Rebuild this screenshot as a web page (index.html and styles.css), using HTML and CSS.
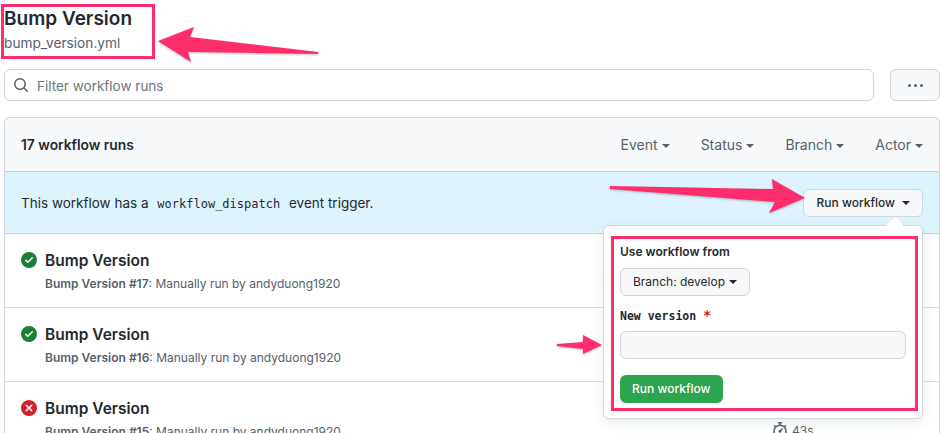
FILE: index.html
```html
<!DOCTYPE html>
<html>
  <head>
    <meta charset="utf8">
    <title>Bump Version</title>
    <link rel="stylesheet" href="styles.css">
  </head>
  <body>
    <div class="page">

      <div class="title-block">
        <h1>Bump Version</h1>
        <div class="file-name">bump_version.yml</div>
      </div>

      <div class="filter-row">
        <div class="filter">
          <svg class="search-icon" viewBox="0 0 16 16" width="16" height="16"><path d="M10.68 11.74a6 6 0 0 1-7.92-8.98 6 6 0 0 1 8.98 7.92l3.04 3.04a.75.75 0 1 1-1.06 1.06ZM11.5 7a4.5 4.5 0 1 0-9 0 4.5 4.5 0 0 0 9 0Z"/></svg>
          <span class="filter-text">Filter workflow runs</span>
        </div>
        <div class="more-button"><i></i><i></i><i></i></div>
      </div>

      <div class="box">
        <div class="box-header">
          <strong>17 workflow runs</strong>
          <div class="filters">
            <span class="caret-item">Event</span>
            <span class="caret-item">Status</span>
            <span class="caret-item">Branch</span>
            <span class="caret-item">Actor</span>
          </div>
        </div>

        <div class="dispatch">
          <span class="dispatch-text">This workflow has a <code>workflow_dispatch</code> event trigger.</span>
          <div class="run-button caret-item">Run workflow</div>

          <div class="popup">
            <div class="popup-label">Use workflow from</div>
            <div class="branch-button caret-item">Branch: develop</div>
            <div class="input-label">New version <span class="required">*</span></div>
            <div class="version-input"></div>
            <div class="green-button">Run workflow</div>
          </div>
        </div>

        <div class="run">
          <svg class="status ok" viewBox="0 0 16 16" width="16" height="16"><path d="M8 16A8 8 0 1 1 8 0a8 8 0 0 1 0 16Zm3.78-9.72a.75.75 0 0 0-1.06-1.06L6.75 9.19 5.28 7.72a.75.75 0 0 0-1.06 1.06l2 2a.75.75 0 0 0 1.06 0Z"/></svg>
          <div>
            <div class="run-title">Bump Version</div>
            <div class="run-sub"><b>Bump Version #17</b>: Manually run by andyduong1920</div>
          </div>
        </div>

        <div class="run">
          <svg class="status ok" viewBox="0 0 16 16" width="16" height="16"><path d="M8 16A8 8 0 1 1 8 0a8 8 0 0 1 0 16Zm3.78-9.72a.75.75 0 0 0-1.06-1.06L6.75 9.19 5.28 7.72a.75.75 0 0 0-1.06 1.06l2 2a.75.75 0 0 0 1.06 0Z"/></svg>
          <div>
            <div class="run-title">Bump Version</div>
            <div class="run-sub"><b>Bump Version #16</b>: Manually run by andyduong1920</div>
          </div>
        </div>

        <div class="run">
          <svg class="status bad" viewBox="0 0 16 16" width="16" height="16"><path d="M2.34 13.66A8 8 0 1 1 13.66 2.34 8 8 0 0 1 2.34 13.66Zm3.44-8.94a.75.75 0 0 0-1.06 1.06L6.94 8l-2.22 2.22a.75.75 0 1 0 1.06 1.06L8 9.06l2.22 2.22a.75.75 0 1 0 1.06-1.06L9.06 8l2.22-2.22a.75.75 0 0 0-1.06-1.06L8 6.94Z"/></svg>
          <div>
            <div class="run-title">Bump Version</div>
            <div class="run-sub"><b>Bump Version #15</b>: Manually run by andyduong1920</div>
          </div>
          <div class="duration">
            <svg viewBox="0 0 16 16" width="16" height="16"><path d="M5.75.75A.75.75 0 0 1 6.5 0h3a.75.75 0 0 1 0 1.5h-.75v1l-.001.041a6.7 6.7 0 0 1 3.464 1.435l.007-.006.75-.75a.75.75 0 1 1 1.06 1.06l-.75.75-.006.007a6.75 6.75 0 1 1-10.548 0L2.72 5.03l-.75-.75a.75.75 0 0 1 1.06-1.06l.75.75.007.006A6.7 6.7 0 0 1 7.25 2.541V1.5H6.5a.75.75 0 0 1-.75-.75ZM8 14.5a5.25 5.25 0 1 0 0-10.5 5.25 5.25 0 0 0 0 10.5Zm.389-6.7 1.33-1.33a.75.75 0 1 1 1.061 1.06L9.45 8.861A1.5 1.5 0 1 1 8.389 7.8Z"/></svg>
            <span>43s</span>
          </div>
        </div>
      </div>

      <!-- annotations drawn on top of the screenshot -->
      <div class="mark mark-title"></div>
      <div class="mark mark-form"></div>
      <svg class="arrows" viewBox="0 0 941 433" width="941" height="433">
        <polygon points="158,41 194,27 190,37 318,52 318,54 188,52 191,62"/>
        <polygon points="610,186 773,189 772,179 805,198 769,213 775,202 610,189"/>
        <polygon points="557,344 583,342 583,335 602,345 583,354 583,349 557,346"/>
      </svg>
    </div>
  </body>
</html>
```

FILE: styles.css
```css
html, body {
  margin: 0;
  background: #ffffff;
}

body {
  font-family: "Inter", "Liberation Sans", sans-serif;
  font-size: 14px;
  color: #24292f;
}

.page {
  position: relative;
  width: 941px;
  height: 433px;
  padding: 0 1px 0 4px;
  box-sizing: border-box;
  overflow: hidden;
}

h1 {
  margin: 0;
  padding-top: 6px;
  font-size: 19px;
  line-height: 25px;
  font-weight: 600;
}

.file-name {
  margin-top: 2px;
  font-size: 13.7px;
  line-height: 20px;
  color: #57606a;
}

.filter-row {
  display: flex;
  gap: 16px;
  margin-top: 16px;
}

.filter {
  flex: 1;
  height: 32px;
  display: flex;
  align-items: center;
  gap: 8px;
  padding-left: 8px;
  box-sizing: border-box;
  border: 1px solid #d0d7de;
  border-radius: 6px;
  font-size: 13.5px;
  color: #6e7781;
}

.filter-text {
  padding-top: 1px;
}

.search-icon {
  fill: #57606a;
}

.more-button {
  width: 50px;
  height: 32px;
  display: flex;
  align-items: center;
  justify-content: center;
  gap: 3px;
  box-sizing: border-box;
  background: #f6f8fa;
  border: 1px solid #d0d7de;
  border-radius: 6px;
}

.more-button i {
  width: 3px;
  height: 3px;
  border-radius: 50%;
  background: #57606a;
}

.box {
  margin-top: 16px;
  border: 1px solid #d0d7de;
  border-radius: 6px 6px 0 0;
  border-bottom: 0;
}

.box-header {
  height: 53px;
  display: flex;
  align-items: center;
  justify-content: space-between;
  padding: 0 16px;
  background: #f6f8fa;
  border-radius: 6px 6px 0 0;
}

.box-header strong {
  font-size: 13.8px;
  font-weight: 600;
}

.filters {
  display: flex;
  gap: 31px;
  color: #57606a;
}

.caret-item::after {
  content: "";
  display: inline-block;
  margin-left: 4px;
  vertical-align: 2px;
  border-style: solid;
  border-width: 4px 4px 0;
  border-color: currentColor transparent transparent;
}

.dispatch {
  position: relative;
  height: 63px;
  display: flex;
  align-items: center;
  justify-content: space-between;
  padding: 0 16px;
  background: #ddf4ff;
  border-top: 1px solid #a8d8f8;
  border-bottom: 1px solid #a8d8f8;
  box-sizing: border-box;
}

.dispatch-text {
  font-size: 13.5px;
}

code {
  font-family: "DejaVu Sans Mono", "Liberation Mono", monospace;
  font-size: 12px;
  padding: 0 5px;
}

.run-button {
  margin-top: 1px;
  padding: 0 12px;
  height: 28px;
  line-height: 26px;
  font-size: 12px;
  font-weight: 500;
  box-sizing: border-box;
  background: #f6f8fa;
  border: 1px solid #d0d7de;
  border-radius: 6px;
}

.run-button::after {
  margin-left: 7px;
}

.popup {
  position: absolute;
  top: 53px;
  right: 16px;
  z-index: 2;
  width: 320px;
  height: 194px;
  padding: 16px;
  box-sizing: border-box;
  background: #ffffff;
  border: 1px solid #d0d7de;
  border-radius: 6px;
  box-shadow: 0 4px 12px rgba(140, 149, 159, 0.2);
  font-size: 12px;
}

.popup::before {
  content: "";
  position: absolute;
  top: -7px;
  right: 21px;
  width: 12px;
  height: 12px;
  background: #ffffff;
  transform: rotate(45deg);
  border-radius: 1px;
}

.popup-label {
  line-height: 20px;
  font-weight: 600;
}

.branch-button {
  display: inline-block;
  margin-top: 6px;
  height: 28px;
  padding: 0 12px;
  line-height: 26px;
  box-sizing: border-box;
  background: #f6f8fa;
  border: 1px solid #d0d7de;
  border-radius: 6px;
}

.input-label {
  margin-top: 9px;
  line-height: 20px;
  font-family: "DejaVu Sans Mono", "Liberation Mono", monospace;
  font-size: 11.5px;
  font-weight: 700;
}

.required {
  font-size: 14px;
  font-weight: 700;
  color: #cf222e;
}

.version-input {
  margin-top: 5px;
  height: 28px;
  box-sizing: border-box;
  background: #f6f8fa;
  border: 1px solid #d0d7de;
  border-radius: 6px;
}

.green-button {
  display: inline-block;
  margin-top: 16px;
  height: 28px;
  padding: 0 12px;
  line-height: 28px;
  font-weight: 500;
  color: #ffffff;
  background: #2da44e;
  border-radius: 6px;
  box-sizing: border-box;
}

.run {
  position: relative;
  height: 74px;
  display: flex;
  gap: 8px;
  padding: 17px 16px 0;
  box-sizing: border-box;
  border-bottom: 1px solid #d8dee4;
}

.status {
  margin-top: 1px;
}

.ok {
  fill: #1a7f37;
}

.bad {
  fill: #cf222e;
}

.run-title {
  font-size: 15.5px;
  line-height: 20px;
  font-weight: 600;
}

.run-sub {
  margin-top: 4px;
  font-size: 12px;
  line-height: 18px;
  color: #57606a;
}

.run-sub b {
  font-weight: 600;
}

.duration {
  margin-left: auto;
  width: 151px;
  display: flex;
  align-items: center;
  gap: 4px;
  align-self: flex-start;
  margin-top: 23px;
  font-size: 12px;
  color: #57606a;
}

.duration svg {
  fill: #57606a;
}

.mark {
  position: absolute;
  z-index: 3;
  box-sizing: border-box;
  border: 3px solid #ff2d6b;
}

.mark-title {
  left: 1px;
  top: 4px;
  width: 154px;
  height: 55px;
}

.mark-form {
  left: 611px;
  top: 236px;
  width: 307px;
  height: 175px;
}

.arrows {
  position: absolute;
  left: 0;
  top: 0;
  z-index: 4;
  fill: #ff2d6b;
  filter: drop-shadow(0 1px 1px rgba(0, 0, 0, 0.25));
}
```
